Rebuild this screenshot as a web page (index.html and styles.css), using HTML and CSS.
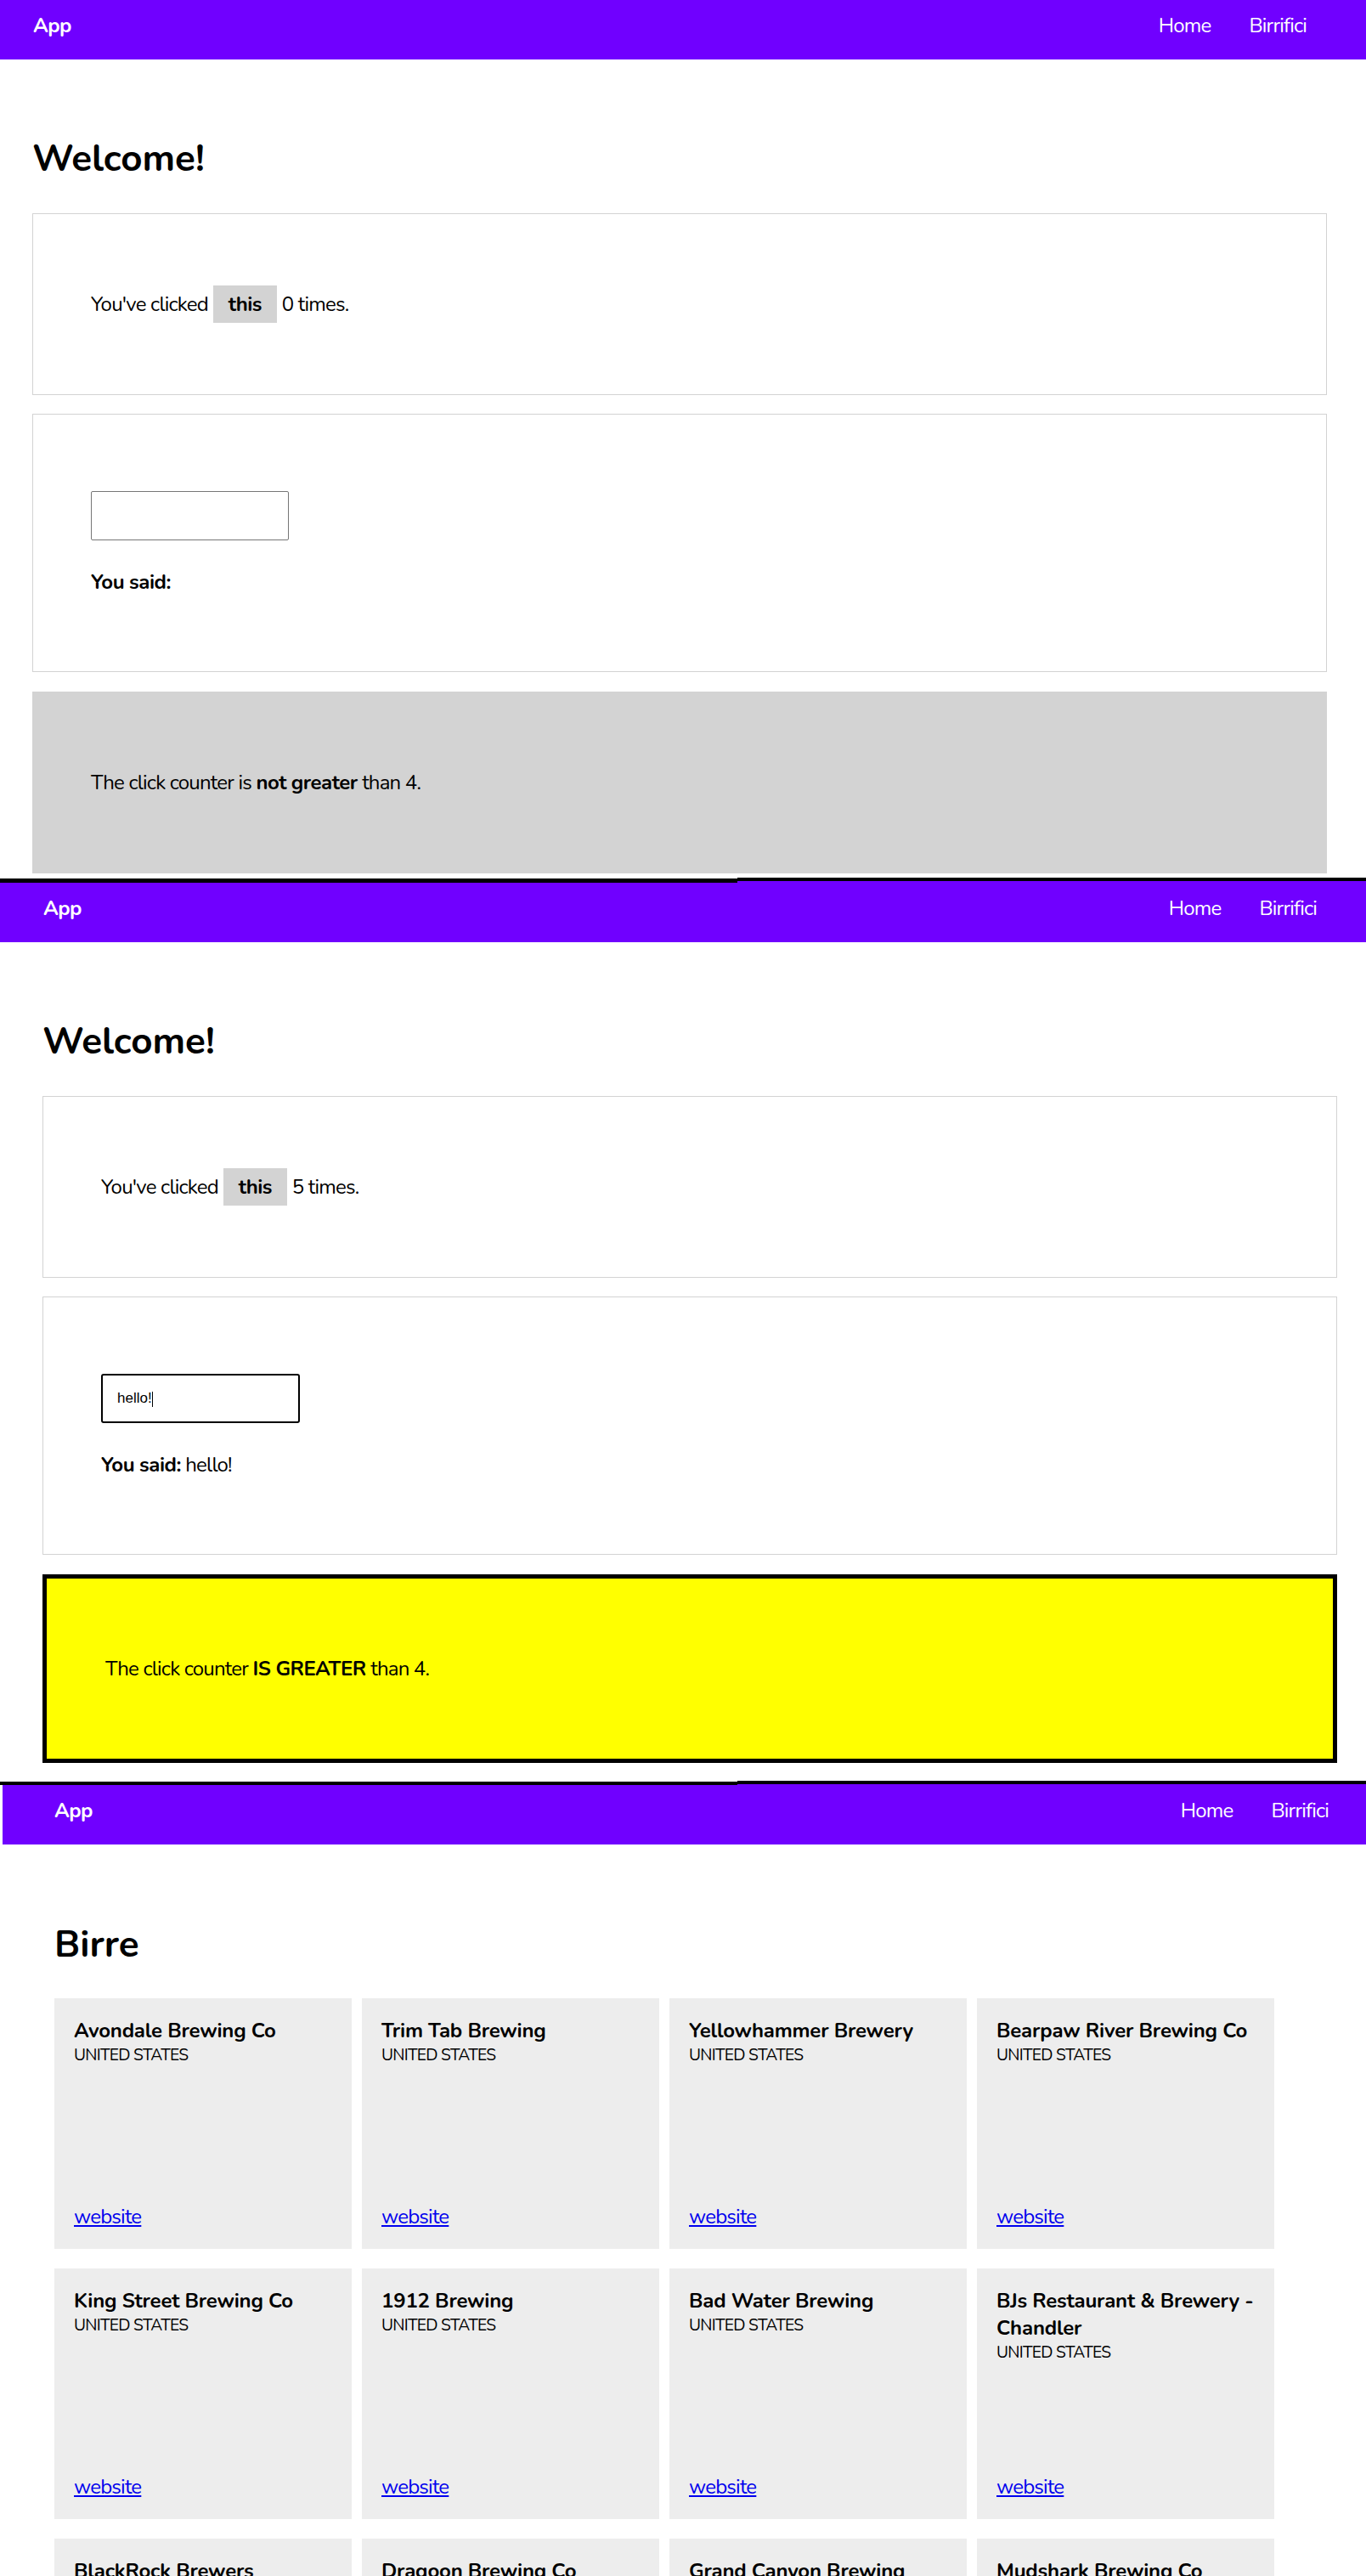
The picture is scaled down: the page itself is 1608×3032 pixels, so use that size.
FILE: index.html
```html
<!DOCTYPE html>
<html lang="en">
<head>
<meta charset="utf-8">
<title>App</title>
<link rel="stylesheet" href="styles.css">
</head>
<body>
<div class="page">
  <section class="frame frame-1">
    <nav class="nav">
      <span class="brand">App</span>
      <div class="links"><a href="#">Home</a><a href="#">Birrifici</a></div>
    </nav>
    <main class="main">
      <h1 class="title">Welcome!</h1>
      <div class="card">
        <p class="counter">You've clicked <button class="btn">this</button> 0 times.</p>
      </div>
      <div class="card card-input">
        <input class="field" type="text">
        <p class="said"><b>You said:</b></p>
      </div>
      <div class="alert alert-gray">
        <p class="alert-text">The click counter is <b>not greater</b> than 4.</p>
      </div>
    </main>
  </section>
  <div class="seam seam-1"><span class="seam-l"></span><span class="seam-r"></span></div>
  <section class="frame frame-2">
    <nav class="nav">
      <span class="brand">App</span>
      <div class="links"><a href="#">Home</a><a href="#">Birrifici</a></div>
    </nav>
    <main class="main">
      <h1 class="title">Welcome!</h1>
      <div class="card">
        <p class="counter">You've clicked <button class="btn">this</button> 5 times.</p>
      </div>
      <div class="card card-input">
        <div class="field-wrap">
          <input class="field field-focus" type="text" value="hello!">
          <span class="caret"></span>
        </div>
        <p class="said"><b>You said:</b> hello!</p>
      </div>
      <div class="alert alert-yellow">
        <p class="alert-text">The click counter <b>IS GREATER</b> than 4.</p>
      </div>
    </main>
  </section>
  <div class="seam seam-2"><span class="seam-l"></span><span class="seam-r"></span></div>
  <section class="frame frame-3">
    <nav class="nav">
      <span class="brand">App</span>
      <div class="links"><a href="#">Home</a><a href="#">Birrifici</a></div>
    </nav>
    <main class="main">
      <h1 class="title">Birre</h1>
      <div class="grid">
        <div class="brew"><h3 class="brew-name">Avondale Brewing Co</h3><p class="brew-country">UNITED STATES</p><a class="brew-link" href="#">website</a></div>
        <div class="brew"><h3 class="brew-name">Trim Tab Brewing</h3><p class="brew-country">UNITED STATES</p><a class="brew-link" href="#">website</a></div>
        <div class="brew"><h3 class="brew-name">Yellowhammer Brewery</h3><p class="brew-country">UNITED STATES</p><a class="brew-link" href="#">website</a></div>
        <div class="brew"><h3 class="brew-name">Bearpaw River Brewing Co</h3><p class="brew-country">UNITED STATES</p><a class="brew-link" href="#">website</a></div>
        <div class="brew"><h3 class="brew-name">King Street Brewing Co</h3><p class="brew-country">UNITED STATES</p><a class="brew-link" href="#">website</a></div>
        <div class="brew"><h3 class="brew-name">1912 Brewing</h3><p class="brew-country">UNITED STATES</p><a class="brew-link" href="#">website</a></div>
        <div class="brew"><h3 class="brew-name">Bad Water Brewing</h3><p class="brew-country">UNITED STATES</p><a class="brew-link" href="#">website</a></div>
        <div class="brew"><h3 class="brew-name">BJs Restaurant &amp; Brewery - Chandler</h3><p class="brew-country">UNITED STATES</p><a class="brew-link" href="#">website</a></div>
        <div class="brew"><h3 class="brew-name">BlackRock Brewers</h3><p class="brew-country">UNITED STATES</p><a class="brew-link" href="#">website</a></div>
        <div class="brew"><h3 class="brew-name">Dragoon Brewing Co</h3><p class="brew-country">UNITED STATES</p><a class="brew-link" href="#">website</a></div>
        <div class="brew"><h3 class="brew-name">Grand Canyon Brewing</h3><p class="brew-country">UNITED STATES</p><a class="brew-link" href="#">website</a></div>
        <div class="brew"><h3 class="brew-name">Mudshark Brewing Co</h3><p class="brew-country">UNITED STATES</p><a class="brew-link" href="#">website</a></div>
      </div>
    </main>
  </section>
</div>
</body>
</html>
```
FILE: styles.css
```css
* { box-sizing: border-box; }

html, body { overflow: hidden; }

body {
  margin: 0;
  font-family: "Nunito", "Lato", sans-serif;
  font-size: 24px;
  letter-spacing: -0.8px;
  color: #000;
  background: #fff;
}

.page { height: 3032px; overflow: hidden; }

.frame { overflow: hidden; }
.frame-1 { height: 1033px; }
.frame-2 { height: 1057px; }
.frame-3 { height: 931px; }

/* joins between the stacked captures */
.seam { display: flex; }
.seam-1 { height: 6px; }
.seam-2 { height: 5px; }
.seam-l { width: 868px; background: #000; border-top: 1px solid #fff; }
.seam-r { flex: 1; background: #7000ff; border-top: 4px solid #000; }

/* navbar */
.nav {
  height: 70px;
  background: #7000ff;
  color: #fff;
  display: flex;
  justify-content: space-between;
  align-items: flex-start;
  padding-top: 16px;
  line-height: 29px;
}
.frame-1 .nav { padding-left: 39px; padding-right: 70px; }
.frame-2 .nav { padding-left: 51px; padding-right: 58px; }
.frame-3 .nav { margin-left: 3px; padding-left: 61px; padding-right: 44px; }

.brand { font-weight: 700; letter-spacing: -0.6px; }
.links { display: flex; gap: 45px; }
.links a { color: #fff; text-decoration: none; }

/* main */
.main { padding-top: 91px; }
.frame-1 .main { padding-left: 38px; padding-right: 46px; }
.frame-2 .main { padding-left: 50px; padding-right: 34px; }
.frame-3 .main { padding-left: 64px; padding-top: 92px; }

.title {
  margin: 0 0 37px;
  font-size: 44px;
  line-height: 53px;
  font-weight: 700;
  letter-spacing: 0;
}
.frame-3 .title { margin-bottom: 36px; }

.card {
  border: 1px solid #d3d3d3;
  padding: 84px 68px;
}
.card + .card { margin-top: 22px; }

.counter {
  margin: 0;
  height: 44px;
  display: flex;
  align-items: center;
  gap: 6px;
}
.btn {
  font: inherit;
  font-weight: 700;
  letter-spacing: -0.6px;
  color: #000;
  background: #d3d3d3;
  border: 0;
  height: 44px;
  padding: 0 18px;
}

.card-input { padding: 90px 68px 90px; }
.field-wrap { position: relative; width: 234px; }
.field {
  display: block;
  width: 233px;
  height: 58px;
  border: 1px solid #767676;
  border-radius: 2px;
  padding: 0 17px;
  font: 17px "Liberation Sans", Arial, sans-serif;
  letter-spacing: 0;
  color: #000;
  background: #fff;
}
.field-focus {
  width: 234px;
  border: 2px solid #000;
  border-radius: 3px;
  outline: none;
}
.caret {
  position: absolute;
  left: 60px;
  top: 21px;
  width: 1px;
  height: 18px;
  background: #000;
}
.said { margin: 35px 0 0; line-height: 29px; }

b { letter-spacing: -0.5px; }

.alert { margin-top: 23px; padding: 84px 68px; }
.alert-gray { background: #d3d3d3; border: 1px solid #d3d3d3; }
.alert-yellow { background: #ffff00; border: 5px solid #000; padding: 84px 69px; }
.alert-text { margin: 0; line-height: 44px; }

/* breweries */
.grid {
  display: grid;
  grid-template-columns: repeat(4, 350px);
  grid-auto-rows: 295px;
  column-gap: 12px;
  row-gap: 23px;
}
.brew {
  background: #ededed;
  padding: 22px 23px;
  display: flex;
  flex-direction: column;
}
.brew-name {
  margin: 0;
  font-size: 24px;
  font-weight: 700;
  line-height: 32px;
  letter-spacing: -0.2px;
}
.brew-country {
  margin: 0;
  font-size: 19.2px;
  line-height: 26px;
  letter-spacing: -0.7px;
}
.brew-link {
  margin-top: auto;
  color: #0000ee;
  text-decoration: underline;
  line-height: 32px;
}
```
